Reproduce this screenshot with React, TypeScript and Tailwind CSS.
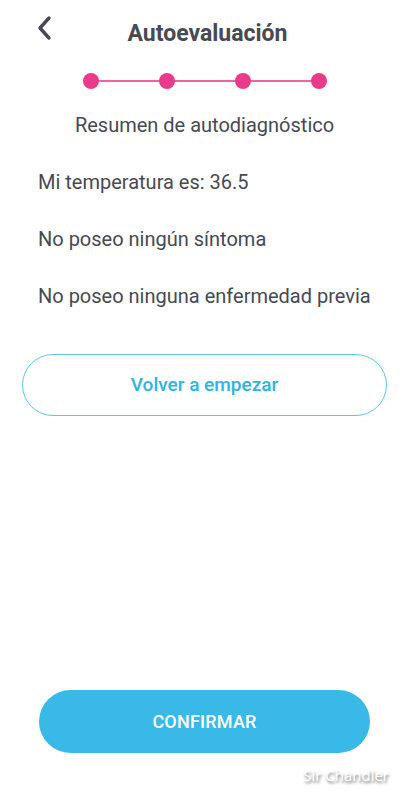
import React from 'react';

const steps = [0, 1, 2, 3];

const answers = [
  'Mi temperatura es: 36.5',
  'No poseo ningún síntoma',
  'No poseo ninguna enfermedad previa',
];

const App: React.FC = () => {
  return (
    <div className="relative w-[409px] h-[800px] bg-white overflow-hidden flex flex-col font-['Roboto',sans-serif] text-[#474955]">
      {/* Header */}
      <div className="flex items-start h-[66px] pt-[18px] px-[30px]">
        <button className="w-[28px] h-[32px] flex items-center justify-center -mt-[6px]">
          <svg width="18" height="26" viewBox="0 0 18 26" fill="none">
            <path d="M14 3 L5 13 L14 23" stroke="#474955" strokeWidth="3.4" strokeLinecap="round" strokeLinejoin="round" />
          </svg>
        </button>
        <h1 className="flex-1 text-center text-[23px] leading-[32px] font-bold text-[#474955] -mr-[6px]">Autoevaluación</h1>
        <div className="w-[28px]" />
      </div>

      {/* Stepper */}
      <div className="mt-[7px] flex items-center justify-center">
        <div className="relative flex items-center w-[244px] justify-between">
          <div className="absolute left-[8px] right-[8px] top-1/2 h-[2px] -translate-y-1/2 bg-[#f0639f]" />
          {steps.map(s => (
            <span key={s} className="relative w-[16px] h-[16px] rounded-full bg-[#ea3b8a]" />
          ))}
        </div>
      </div>

      <p className="mt-[23px] text-center text-[20px] leading-[26px]">Resumen de autodiagnóstico</p>

      {/* Answers */}
      <div className="mt-[31px] px-[38px] flex flex-col gap-[31px]">
        {answers.map(a => (
          <p key={a} className="text-[20px] leading-[26px]">{a}</p>
        ))}
      </div>

      <div className="mt-[45px] px-[22px]">
        <button className="w-full h-[62px] rounded-full border border-[#5cc6ea] text-[#2db4e5] text-[19px] font-medium">
          Volver a empezar
        </button>
      </div>

      {/* Bottom */}
      <div className="mt-auto mb-[47px] px-[39px]">
        <button className="w-full h-[63px] rounded-full bg-[#38b9e8] text-white text-[18px] font-medium tracking-[0.2px]">
          CONFIRMAR
        </button>
      </div>

      <span className="absolute right-[20px] top-[764px] text-[15px] text-white font-['Open_Sans',sans-serif] [text-shadow:1px_2px_3px_rgba(0,0,0,0.6)]">
        Sir Chandler
      </span>
    </div>
  );
};

export default App;
